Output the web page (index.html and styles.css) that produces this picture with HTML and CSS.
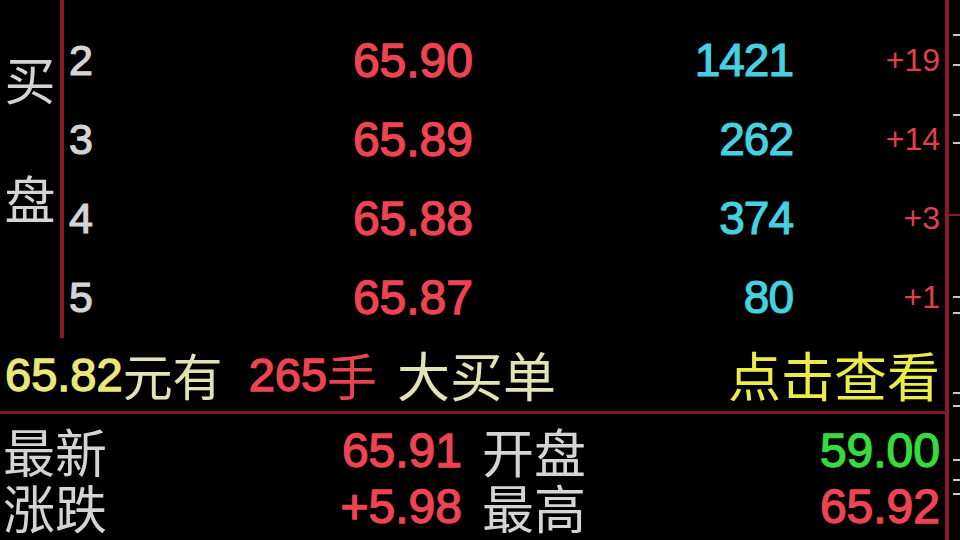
FILE: index.html
```html
<!DOCTYPE html>
<html lang="zh-CN">
<head>
<meta charset="utf-8">
<title>五档盘口</title>
<link rel="stylesheet" href="styles.css">
</head>
<body>
<div class="screen">
  <div class="panel">
    <section class="book">
      <div class="side-label">
        <span class="side-char">买</span>
        <span class="side-char">盘</span>
      </div>
      <div class="divider-v"></div>
      <div class="levels">
        <div class="level">
          <span class="num">2</span>
          <span class="price">65.90</span>
          <span class="vol">1421</span>
          <span class="chg">+19</span>
        </div>
        <div class="level">
          <span class="num">3</span>
          <span class="price">65.89</span>
          <span class="vol">262</span>
          <span class="chg">+14</span>
        </div>
        <div class="level">
          <span class="num">4</span>
          <span class="price">65.88</span>
          <span class="vol">374</span>
          <span class="chg">+3</span>
        </div>
        <div class="level">
          <span class="num">5</span>
          <span class="price">65.87</span>
          <span class="vol">80</span>
          <span class="chg">+1</span>
        </div>
      </div>
    </section>
    <section class="bigorder">
      <div class="bo-text">
        <span class="bo-price">65.82</span><span class="bo-cn">元有</span><span class="bo-qty">265</span><span class="bo-hand">手</span><span class="bo-cn bo-kind">大买单</span>
      </div>
      <span class="bo-link">点击查看</span>
    </section>
    <section class="stats">
      <div class="stat">
        <span class="s-label">最新</span>
        <span class="s-val up">65.91</span>
      </div>
      <div class="stat">
        <span class="s-label">开盘</span>
        <span class="s-val down">59.00</span>
      </div>
      <div class="stat">
        <span class="s-label">涨跌</span>
        <span class="s-val up">+5.98</span>
      </div>
      <div class="stat">
        <span class="s-label">最高</span>
        <span class="s-val up">65.92</span>
      </div>
    </section>
  </div>
  <div class="divider-r"></div>
  <div class="strip">
    <svg width="12" height="540" viewBox="0 0 12 540" aria-hidden="true">
      <g fill="#c8c8c8">
        <rect x="5" y="34" width="7" height="2"/>
        <rect x="5" y="64" width="7" height="2"/>
        <rect x="5" y="114" width="7" height="2"/>
        <rect x="5" y="142" width="7" height="2"/>
        <rect x="5" y="296" width="7" height="2"/>
        <rect x="5" y="312" width="7" height="2"/>
        <rect x="5" y="392" width="7" height="2"/>
        <rect x="5" y="405" width="7" height="2"/>
        <rect x="5" y="459" width="7" height="2"/>
        <rect x="5" y="479" width="7" height="2"/>
        <rect x="5" y="493" width="7" height="2"/>
      </g>
      <rect x="0" y="214" width="12" height="2" fill="#8b1a2a"/>
    </svg>
  </div>
</div>
</body>
</html>
```

FILE: styles.css
```css
html, body {
  margin: 0;
  padding: 0;
  background: #000;
}

.screen {
  width: 960px;
  height: 540px;
  overflow: hidden;
  display: flex;
  background: #000;
  font-family: "Liberation Sans", "Noto Sans CJK SC", sans-serif;
}

.panel {
  width: 945px;
  display: flex;
  flex-direction: column;
}

.divider-r {
  width: 4px;
  background: #8b1a2a;
}

.strip {
  width: 11px;
  overflow: hidden;
}

.strip svg {
  display: block;
  margin-left: -1px;
}

/* order book */
.book {
  height: 338px;
  display: flex;
}

.side-label {
  width: 60px;
  display: flex;
  flex-direction: column;
  align-items: center;
  padding-top: 53px;
  gap: 68px;
  box-sizing: border-box;
}

.side-char {
  font-family: "Noto Sans CJK SC", sans-serif;
  font-size: 51px;
  line-height: 51px;
  color: #d4d4d4;
}

.divider-v {
  width: 4px;
  background: #8b1a2a;
}

.levels {
  flex: 1;
  padding-top: 21px;
}

.level {
  height: 79px;
  display: grid;
  grid-template-columns: 41px 363px 320px 147px;
  align-items: center;
  padding-left: 5px;
  line-height: 79px;
}

.num {
  font-size: 43px;
  color: #d4d4d4;
  -webkit-text-stroke: 1.2px #d4d4d4;
}

.price {
  text-align: right;
  font-size: 48px;
  color: #ee4452;
  -webkit-text-stroke: 1.4px #ee4452;
}

.vol {
  text-align: right;
  font-size: 46px;
  letter-spacing: -1px;
  color: #44d2e2;
  -webkit-text-stroke: 1.2px #44d2e2;
}

.chg {
  text-align: right;
  font-size: 32px;
  color: #e0404c;
}

/* big order line */
.bigorder {
  height: 73px;
  border-bottom: 3px solid #821624;
  display: flex;
  align-items: center;
  justify-content: space-between;
  padding: 0 5px 0 5px;
}

.bo-text {
  display: flex;
  align-items: center;
  line-height: 73px;
}

.bo-price {
  font-size: 47px;
  color: #e8e87a;
  -webkit-text-stroke: 1.4px #e8e87a;
}

.bo-cn {
  font-family: "Noto Sans CJK SC", sans-serif;
  font-size: 50px;
  color: #e2e2b6;
}

.bo-qty {
  margin-left: 26px;
  font-size: 47px;
  color: #ee4452;
  -webkit-text-stroke: 1.4px #ee4452;
}

.bo-hand {
  font-family: "Noto Sans CJK SC", sans-serif;
  font-size: 50px;
  color: #e84450;
}

.bo-kind {
  margin-left: 20px;
  font-size: 53px;
}

.bo-link {
  font-family: "Noto Sans CJK SC", sans-serif;
  font-size: 53px;
  line-height: 73px;
  color: #ecec48;
}

/* stats */
.stats {
  padding: 9px 5px 0 3px;
  display: grid;
  grid-template-columns: 459px 458px;
  column-gap: 20px;
}

.stat {
  height: 56px;
  display: flex;
  align-items: center;
  justify-content: space-between;
}

.s-label {
  font-family: "Noto Sans CJK SC", sans-serif;
  font-size: 52px;
  line-height: 52px;
  color: #d4d4d4;
}

.s-val {
  font-size: 48px;
  line-height: 52px;
}

.up {
  color: #ee4452;
  -webkit-text-stroke: 1.4px #ee4452;
}

.down {
  color: #34dc3c;
  -webkit-text-stroke: 1.4px #34dc3c;
}
```
